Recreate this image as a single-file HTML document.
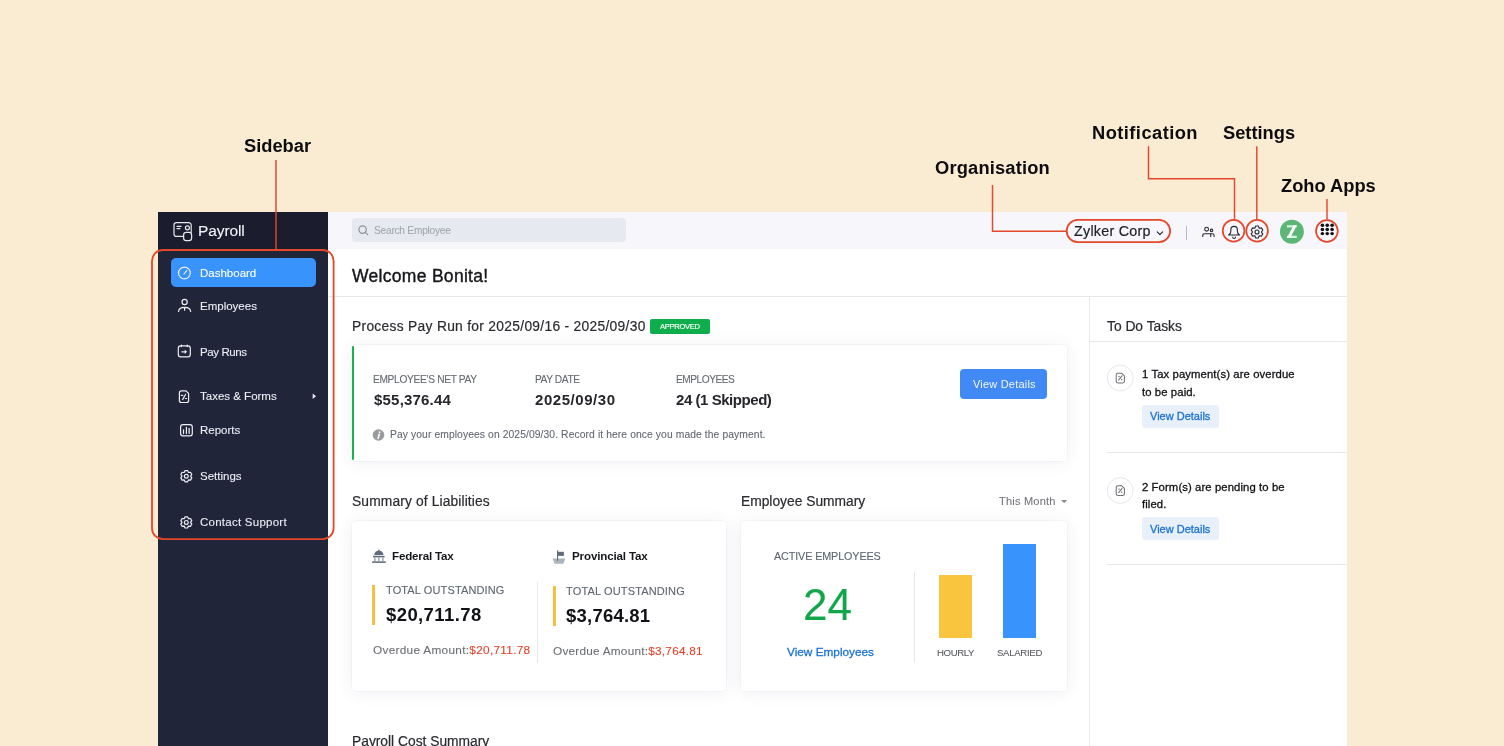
<!DOCTYPE html>
<html><head><meta charset="utf-8"><style>
html,body{margin:0;padding:0;width:1504px;height:746px;overflow:hidden;background:#faebd3;}
body{position:relative;font-family:"Liberation Sans",sans-serif;}
.t{position:absolute;white-space:nowrap;will-change:transform;}
.r{position:absolute;}
</style></head><body>
<div class="r" style="left:158px;top:212px;width:170px;height:534px;background:#21253a"></div>
<div class="r" style="left:158px;top:212px;width:170px;height:38px;background:#1b1d2e"></div>
<div class="r" style="left:328px;top:212px;width:1019px;height:534px;background:#ffffff"></div>
<div class="r" style="left:328px;top:212px;width:1019px;height:37px;background:#f6f6fb"></div>
<div class="r" style="left:328px;top:296px;width:1019px;height:1px;background:#e8e8eb"></div>
<div class="r" style="left:1089px;top:297px;width:1px;height:449px;background:#e8e8eb"></div>
<div class="t" style="left:197.5px;top:223.48px;font-size:15.5px;line-height:15.5px;color:#f2f3f6;font-weight:400;letter-spacing:-0.1px;-webkit-text-stroke:0.1px #f2f3f6;">Payroll</div>
<div class="r" style="left:171px;top:258px;width:145px;height:29px;background:#3893fc;border-radius:5px"></div>
<div class="t" style="left:200px;top:267.87px;font-size:11.5px;line-height:11.5px;color:#ffffff;font-weight:400;letter-spacing:0px;-webkit-text-stroke:0.1px #ffffff;">Dashboard</div>
<div class="t" style="left:200px;top:300.87px;font-size:11.5px;line-height:11.5px;color:#eceef3;font-weight:400;letter-spacing:0px;-webkit-text-stroke:0.1px #eceef3;">Employees</div>
<div class="t" style="left:200px;top:346.87px;font-size:11.5px;line-height:11.5px;color:#eceef3;font-weight:400;letter-spacing:-0.4px;-webkit-text-stroke:0.1px #eceef3;">Pay Runs</div>
<div class="t" style="left:200px;top:391.37px;font-size:11.5px;line-height:11.5px;color:#eceef3;font-weight:400;letter-spacing:0px;-webkit-text-stroke:0.1px #eceef3;">Taxes &amp; Forms</div>
<div class="t" style="left:200px;top:424.87px;font-size:11.5px;line-height:11.5px;color:#eceef3;font-weight:400;letter-spacing:0px;-webkit-text-stroke:0.1px #eceef3;">Reports</div>
<div class="t" style="left:200px;top:471.37px;font-size:11.5px;line-height:11.5px;color:#eceef3;font-weight:400;letter-spacing:0px;-webkit-text-stroke:0.1px #eceef3;">Settings</div>
<div class="t" style="left:200px;top:517.37px;font-size:11.5px;line-height:11.5px;color:#eceef3;font-weight:400;letter-spacing:0.25px;-webkit-text-stroke:0.1px #eceef3;">Contact Support</div>
<div class="r" style="left:352px;top:218px;width:274px;height:24px;background:#e6e9f0;border-radius:4px"></div>
<div class="t" style="left:374.1px;top:226.07px;font-size:10.2px;line-height:10.2px;color:#a3a7b0;font-weight:400;letter-spacing:-0.25px;-webkit-text-stroke:0.1px #a3a7b0;">Search Employee</div>
<div class="t" style="left:1073.8px;top:224.10px;font-size:14.3px;line-height:14.3px;color:#1e2025;font-weight:400;letter-spacing:0.25px;-webkit-text-stroke:0.2px #1e2025;">Zylker Corp</div>
<div class="r" style="left:1186px;top:226px;width:1px;height:14px;background:#b5bacb"></div>
<div class="t" style="left:352px;top:267.79px;font-size:17.5px;line-height:17.5px;color:#16171b;font-weight:400;letter-spacing:0.3px;-webkit-text-stroke:0.4px #16171b;">Welcome Bonita!</div>
<div class="t" style="left:352px;top:319.92px;font-size:13.8px;line-height:13.8px;color:#2a2b30;font-weight:400;letter-spacing:0.3px;-webkit-text-stroke:0.2px #2a2b30;">Process Pay Run for 2025/09/16 - 2025/09/30</div>
<div class="r" style="left:650px;top:319px;width:60px;height:15px;background:#0fae4c;border-radius:2px"></div>
<div class="t" style="left:659.6px;top:322.77px;font-size:7.6px;line-height:7.6px;color:#ffffff;font-weight:400;letter-spacing:-0.3px;-webkit-text-stroke:0.15px #ffffff;">APPROVED</div>
<div class="r" style="left:352px;top:345px;width:715px;height:116px;background:#fff;border-radius:4px;box-shadow:0 1px 18px rgba(40,50,110,0.075),0 0 0 1px rgba(40,50,110,0.03);"></div>
<div class="r" style="left:352px;top:346px;width:2px;height:114px;background:#18b24f;border-radius:1px"></div>
<div class="t" style="left:373.3px;top:374.97px;font-size:10.2px;line-height:10.2px;color:#666a71;font-weight:400;letter-spacing:-0.34px;-webkit-text-stroke:0.1px #666a71;">EMPLOYEE’S NET PAY</div>
<div class="t" style="left:373.5px;top:391.90px;font-size:15px;line-height:15px;color:#26272c;font-weight:700;letter-spacing:0.2px;">$55,376.44</div>
<div class="t" style="left:534.5px;top:374.97px;font-size:10.2px;line-height:10.2px;color:#666a71;font-weight:400;letter-spacing:-0.42px;-webkit-text-stroke:0.1px #666a71;">PAY DATE</div>
<div class="t" style="left:534.5px;top:391.90px;font-size:15px;line-height:15px;color:#26272c;font-weight:700;letter-spacing:0.55px;">2025/09/30</div>
<div class="t" style="left:676.2px;top:374.97px;font-size:10.2px;line-height:10.2px;color:#666a71;font-weight:400;letter-spacing:-0.5px;-webkit-text-stroke:0.1px #666a71;">EMPLOYEES</div>
<div class="t" style="left:676px;top:391.90px;font-size:15px;line-height:15px;color:#26272c;font-weight:700;letter-spacing:-0.45px;">24 (1 Skipped)</div>
<div class="r" style="left:960px;top:369px;width:87px;height:30px;background:#4189f5;border-radius:4px"></div>
<div class="t" style="left:972.5px;top:379.29px;font-size:11px;line-height:11px;color:#f4f8ff;font-weight:400;letter-spacing:0.2px;">View Details</div>
<div class="t" style="left:390px;top:430.38px;font-size:10.3px;line-height:10.3px;color:#626873;font-weight:400;letter-spacing:0.1px;-webkit-text-stroke:0.1px #626873;">Pay your employees on 2025/09/30. Record it here once you made the payment.</div>
<div class="t" style="left:352px;top:494.92px;font-size:13.8px;line-height:13.8px;color:#2a2b30;font-weight:400;letter-spacing:0.13px;-webkit-text-stroke:0.2px #2a2b30;">Summary of Liabilities</div>
<div class="r" style="left:352px;top:521px;width:374px;height:169.6px;background:#fff;border-radius:4px;box-shadow:0 1px 18px rgba(40,50,110,0.075),0 0 0 1px rgba(40,50,110,0.03);"></div>
<div class="t" style="left:392px;top:549.98px;font-size:11.6px;line-height:11.6px;color:#17181c;font-weight:700;letter-spacing:-0.18px;">Federal Tax</div>
<div class="t" style="left:572px;top:549.88px;font-size:11.6px;line-height:11.6px;color:#17181c;font-weight:700;letter-spacing:-0.15px;">Provincial Tax</div>
<div class="r" style="left:372px;top:585px;width:3px;height:40px;background:#f6bf3f"></div>
<div class="r" style="left:552.5px;top:586px;width:3px;height:40px;background:#f6bf3f"></div>
<div class="r" style="left:537px;top:582px;width:1px;height:81px;background:#e8e8eb"></div>
<div class="t" style="left:386px;top:585.09px;font-size:11px;line-height:11px;color:#5c6570;font-weight:400;letter-spacing:0.13px;-webkit-text-stroke:0.1px #5c6570;">TOTAL OUTSTANDING</div>
<div class="t" style="left:386px;top:605.94px;font-size:18.5px;line-height:18.5px;color:#111216;font-weight:700;letter-spacing:0.4px;">$20,711.78</div>
<div class="t" style="left:372.5px;top:645.11px;font-size:11.8px;line-height:11.8px;color:#6d6f74;font-weight:400;letter-spacing:0.3px;-webkit-text-stroke:0.1px #6d6f74;">Overdue Amount:<span style="color:#e3432a;-webkit-text-stroke-color:#e3432a">$20,711.78</span></div>
<div class="t" style="left:566px;top:586.29px;font-size:11px;line-height:11px;color:#5c6570;font-weight:400;letter-spacing:0.15px;-webkit-text-stroke:0.1px #5c6570;">TOTAL OUTSTANDING</div>
<div class="t" style="left:566px;top:606.94px;font-size:18.5px;line-height:18.5px;color:#111216;font-weight:700;letter-spacing:0.22px;">$3,764.81</div>
<div class="t" style="left:553px;top:645.61px;font-size:11.8px;line-height:11.8px;color:#6d6f74;font-weight:400;letter-spacing:0.23px;-webkit-text-stroke:0.1px #6d6f74;">Overdue Amount:<span style="color:#e3432a;-webkit-text-stroke-color:#e3432a">$3,764.81</span></div>
<div class="t" style="left:741px;top:494.92px;font-size:13.8px;line-height:13.8px;color:#2a2b30;font-weight:400;letter-spacing:0px;-webkit-text-stroke:0.2px #2a2b30;">Employee Summary</div>
<div class="t" style="left:999px;top:496.29px;font-size:11px;line-height:11px;color:#74767c;font-weight:400;letter-spacing:0.22px;-webkit-text-stroke:0.1px #74767c;">This Month</div>
<div class="r" style="left:741px;top:521px;width:326px;height:169.6px;background:#fff;border-radius:4px;box-shadow:0 1px 18px rgba(40,50,110,0.075),0 0 0 1px rgba(40,50,110,0.03);"></div>
<div class="t" style="left:774px;top:551.46px;font-size:10.8px;line-height:10.8px;color:#5c6570;font-weight:400;letter-spacing:-0.12px;-webkit-text-stroke:0.1px #5c6570;">ACTIVE EMPLOYEES</div>
<div class="t" style="left:802.8px;top:583.35px;font-size:44px;line-height:44px;color:#12a64b;font-weight:400;letter-spacing:0px;-webkit-text-stroke:0.1px #12a64b;">24</div>
<div class="t" style="left:787px;top:646.61px;font-size:11.8px;line-height:11.8px;color:#1b72d6;font-weight:400;letter-spacing:0px;-webkit-text-stroke:0.3px #1b72d6;">View Employees</div>
<div class="r" style="left:914px;top:572px;width:1px;height:91px;background:#e8e8eb"></div>
<div class="r" style="left:939px;top:575px;width:33px;height:63px;background:#f9c43e"></div>
<div class="r" style="left:1003px;top:544px;width:33px;height:94px;background:#3993fd"></div>
<div class="t" style="left:937px;top:648.47px;font-size:9.6px;line-height:9.6px;color:#5a5c62;font-weight:400;letter-spacing:-0.35px;-webkit-text-stroke:0.1px #5a5c62;">HOURLY</div>
<div class="t" style="left:997px;top:648.47px;font-size:9.6px;line-height:9.6px;color:#5a5c62;font-weight:400;letter-spacing:-0.3px;-webkit-text-stroke:0.1px #5a5c62;">SALARIED</div>
<div class="t" style="left:352px;top:735.22px;font-size:13.8px;line-height:13.8px;color:#2a2b30;font-weight:400;letter-spacing:0px;-webkit-text-stroke:0.2px #2a2b30;">Payroll Cost Summary</div>
<div class="t" style="left:1107px;top:319.92px;font-size:13.8px;line-height:13.8px;color:#2a2b30;font-weight:400;letter-spacing:0px;-webkit-text-stroke:0.2px #2a2b30;">To Do Tasks</div>
<div class="r" style="left:1090px;top:341px;width:257px;height:1px;background:#e8e8eb"></div>
<div class="t" style="left:1142px;top:369.23px;font-size:11.3px;line-height:11.3px;color:#111216;font-weight:400;letter-spacing:0.1px;-webkit-text-stroke:0.3px #111216;">1 Tax payment(s) are overdue</div>
<div class="t" style="left:1142px;top:386.83px;font-size:11.3px;line-height:11.3px;color:#111216;font-weight:400;letter-spacing:0.1px;-webkit-text-stroke:0.3px #111216;">to be paid.</div>
<div class="r" style="left:1142px;top:404.6px;width:77px;height:23px;background:#e8f0fc;border-radius:3px"></div>
<div class="t" style="left:1150px;top:411.39px;font-size:11px;line-height:11px;color:#1b72d6;font-weight:400;letter-spacing:0px;-webkit-text-stroke:0.3px #1b72d6;">View Details</div>
<div class="r" style="left:1107px;top:452px;width:240px;height:1px;background:#e8e8eb"></div>
<div class="t" style="left:1142px;top:481.73px;font-size:11.3px;line-height:11.3px;color:#111216;font-weight:400;letter-spacing:0.1px;-webkit-text-stroke:0.3px #111216;">2 Form(s) are pending to be</div>
<div class="t" style="left:1142px;top:499.33px;font-size:11.3px;line-height:11.3px;color:#111216;font-weight:400;letter-spacing:0.1px;-webkit-text-stroke:0.3px #111216;">filed.</div>
<div class="r" style="left:1142px;top:517.1px;width:77px;height:23px;background:#e8f0fc;border-radius:3px"></div>
<div class="t" style="left:1150px;top:523.89px;font-size:11px;line-height:11px;color:#1b72d6;font-weight:400;letter-spacing:0px;-webkit-text-stroke:0.3px #1b72d6;">View Details</div>
<div class="r" style="left:1107px;top:564px;width:240px;height:1px;background:#e8e8eb"></div>
<svg class="r" style="left:0;top:0" width="1504" height="746" viewBox="0 0 1504 746"><g fill="none" stroke="#e6e7ec" stroke-width="1.2" stroke-linecap="round" stroke-linejoin="round"><path d="M183.6 236.4H176.5A2.5 2.5 0 0 1 174 233.9V225.2A2.5 2.5 0 0 1 176.5 222.7H188.7A2.5 2.5 0 0 1 191.2 225.2V232.4"/><path d="M177 226.4H181M177 228.6H180"/><circle cx="187.4" cy="227.8" r="2"/><rect x="183.6" y="232.4" width="8" height="8.2" rx="2.6"/></g><g fill="none" stroke="#eceef3" stroke-width="1.2" stroke-linecap="round" stroke-linejoin="round"><circle cx="184.4" cy="273" r="5.9"/><path d="M184 274L186.7 270.6"/></g><g fill="none" stroke="#eceef3" stroke-width="1.2" stroke-linecap="round" stroke-linejoin="round"><circle cx="184.6" cy="302" r="2.6"/><path d="M178.6 311.4C178.6 308.8 181.2 307.3 184.6 307.3C188 307.3 190.6 308.8 190.6 311.4M184.6 307.6V310.2"/></g><g fill="none" stroke="#eceef3" stroke-width="1.2" stroke-linecap="round" stroke-linejoin="round"><rect x="178.3" y="345.9" width="12" height="11" rx="2.3"/><path d="M181.4 345.2V346.6M187.2 345.2V346.6M181.9 351.8H185.2"/></g><path d="M184.7 349.7L187.1 351.8L184.7 353.9Z" fill="#eceef3"/><g fill="none" stroke="#eceef3" stroke-width="1.2" stroke-linecap="round" stroke-linejoin="round"><path d="M186 390.9H181.4A2 2 0 0 0 179.4 392.9V400.5A2 2 0 0 0 181.4 402.5H186.6A2 2 0 0 0 188.6 400.5V393.5Z"/><path d="M182.6 399.6L185.6 394.3M181.4 395.4H182.7M185.4 398.5H186.6"/></g><g fill="none" stroke="#eceef3" stroke-width="1.2" stroke-linecap="round" stroke-linejoin="round"><rect x="180.6" y="424.6" width="11.7" height="11.2" rx="2.3"/><path d="M183.5 433.6V429.8M186.4 433.6V427.3"/></g><rect x="188.3" y="428" width="1.7" height="5.9" fill="#b9bbc4"/><path d="M312.7 393.6L316 396.3L312.7 399Z" fill="#eceef3"/><g fill="none" stroke="#eceef3" stroke-width="1.2" stroke-linecap="round" stroke-linejoin="round"><path d="M184.18 472.52 L185.05 470.59 L187.55 470.59 L188.43 472.52 L190.53 472.31 L191.79 474.48 L190.55 476.20 L191.79 477.92 L190.53 480.09 L188.43 479.88 L187.55 481.81 L185.05 481.81 L184.18 479.88 L182.07 480.09 L180.81 477.92 L182.05 476.20 L180.81 474.48 L182.07 472.31Z"/><circle cx="186.3" cy="476.2" r="1.9"/></g><g fill="none" stroke="#eceef3" stroke-width="1.2" stroke-linecap="round" stroke-linejoin="round"><path d="M184.18 518.72 L185.05 516.79 L187.55 516.79 L188.43 518.72 L190.53 518.51 L191.79 520.68 L190.55 522.40 L191.79 524.12 L190.53 526.29 L188.43 526.08 L187.55 528.01 L185.05 528.01 L184.18 526.08 L182.07 526.29 L180.81 524.12 L182.05 522.40 L180.81 520.68 L182.07 518.51Z"/><circle cx="186.3" cy="522.4" r="1.9"/></g><g fill="none" stroke="#8d919b" stroke-width="1.2" stroke-linecap="round"><circle cx="362.6" cy="229.6" r="3.7"/><path d="M365.4 232.4L367.6 234.6"/></g><path d="M1157.2 231.9L1159.9 234.6L1162.6 231.9" fill="none" stroke="#25272d" stroke-width="1.2" stroke-linecap="round" stroke-linejoin="round"/><g fill="none" stroke="#26282e" stroke-width="1.1" stroke-linecap="round" stroke-linejoin="round"><circle cx="1206.6" cy="229.2" r="1.9"/><circle cx="1211.5" cy="230.4" r="1.25"/><path d="M1202.7 236.5V235.4Q1202.7 233.8 1204.5 233.8H1212.3Q1214.1 233.8 1214.1 235.4V236.5M1210.7 234V236.5"/></g><g fill="none" stroke="#26282e" stroke-width="1.1" stroke-linecap="round" stroke-linejoin="round"><path d="M1228.65 234.95Q1230.85 233.6 1230.85 231.6V229.6A3.25 3.25 0 0 1 1237.35 229.6V231.6Q1237.35 233.6 1239.55 234.95Z"/><path d="M1232.7 237.1A1.4 1.4 0 0 0 1235.5 237.1"/></g><g fill="none" stroke="#26282e" stroke-width="1.1" stroke-linecap="round" stroke-linejoin="round"><path d="M1254.80 228.19 L1255.73 226.03 L1258.27 226.03 L1259.20 228.19 L1261.53 227.92 L1262.80 230.11 L1261.40 232.00 L1262.80 233.89 L1261.53 236.08 L1259.20 235.81 L1258.27 237.97 L1255.73 237.97 L1254.80 235.81 L1252.47 236.08 L1251.20 233.89 L1252.60 232.00 L1251.20 230.11 L1252.47 227.92Z"/><circle cx="1257" cy="232" r="2"/></g><circle cx="1291.9" cy="231.7" r="11.95" fill="#5cb776"/><rect x="1286.9" y="225.2" width="9.85" height="2.25" fill="#d2f4da"/><rect x="1286.9" y="235.75" width="9.85" height="2.25" fill="#d2f4da"/><path d="M1293.5 225.2H1296.75L1290.3 238H1286.9Z" fill="#fff"/><ellipse cx="1322.4" cy="225.3" rx="1.8" ry="1.7" fill="#111"/><ellipse cx="1327.25" cy="225.3" rx="1.8" ry="1.7" fill="#111"/><ellipse cx="1332.1" cy="225.3" rx="1.8" ry="1.7" fill="#111"/><ellipse cx="1322.4" cy="229.5" rx="1.8" ry="1.7" fill="#111"/><ellipse cx="1327.25" cy="229.5" rx="1.8" ry="1.7" fill="#111"/><ellipse cx="1332.1" cy="229.5" rx="1.8" ry="1.7" fill="#111"/><ellipse cx="1322.4" cy="233.6" rx="1.8" ry="1.7" fill="#111"/><ellipse cx="1327.25" cy="233.6" rx="1.8" ry="1.7" fill="#111"/><ellipse cx="1332.1" cy="233.6" rx="1.8" ry="1.7" fill="#111"/><circle cx="378.5" cy="435" r="5.8" fill="#9a9b9f"/><path d="M379.2 434.3L378.1 438.4" stroke="#fff" stroke-width="1.6" stroke-linecap="round"/><circle cx="379.6" cy="432.2" r=".9" fill="#fff"/><g fill="#5f6c7b"><path d="M374.2 555Q374.6 550.9 378.85 550.5Q383.1 550.9 383.5 555Z"/><circle cx="378.85" cy="550.3" r="0.8"/><rect x="373" y="555.8" width="11.6" height="1.6"/><rect x="372.1" y="561.3" width="13.6" height="1.6"/></g><g fill="#9aa6b3"><rect x="374.1" y="557.4" width="1.5" height="3.9"/><rect x="378.1" y="557.4" width="1.5" height="3.9"/><rect x="382.1" y="557.4" width="1.5" height="3.9"/></g><path d="M552.5 558.6H562.6Q564.8 557.6 565.1 559.4L563.3 563.7H554.6Z" fill="#a9b5bf"/><g fill="#5f6d7c"><rect x="557" y="550.4" width="1.1" height="10.3"/><rect x="558" y="551.8" width="5.9" height="4.1"/></g><path d="M1061.2 500H1067.1L1064.15 503.2Z" fill="#8a8c92"/><circle cx="1120.2" cy="378" r="12.9" fill="#fff" stroke="#e6e6ea" stroke-width="1"/><g transform="translate(0 0)" fill="none" stroke="#6f7176" stroke-width="1.05" stroke-linecap="round" stroke-linejoin="round"><path d="M1121.8 373.3H1117.8A1.6 1.6 0 0 0 1116.2 374.9V381.3A1.6 1.6 0 0 0 1117.8 382.9H1122.8A1.6 1.6 0 0 0 1124.4 381.3V375.9Z"/><path d="M1118.7 380.1L1122 375.9M1118.8 376.6H1119.3M1121.4 379.6H1121.9"/></g><circle cx="1120.2" cy="490.5" r="12.9" fill="#fff" stroke="#e6e6ea" stroke-width="1"/><g transform="translate(0 112.5)" fill="none" stroke="#6f7176" stroke-width="1.05" stroke-linecap="round" stroke-linejoin="round"><path d="M1121.8 373.3H1117.8A1.6 1.6 0 0 0 1116.2 374.9V381.3A1.6 1.6 0 0 0 1117.8 382.9H1122.8A1.6 1.6 0 0 0 1124.4 381.3V375.9Z"/><path d="M1118.7 380.1L1122 375.9M1118.8 376.6H1119.3M1121.4 379.6H1121.9"/></g></svg>
<div class="t" style="left:243.5px;top:136.91px;font-size:18.3px;line-height:18.3px;color:#0d0d0f;font-weight:700;letter-spacing:0px;">Sidebar</div>
<div class="t" style="left:934.5px;top:159.11px;font-size:18.3px;line-height:18.3px;color:#0d0d0f;font-weight:700;letter-spacing:0.18px;">Organisation</div>
<div class="t" style="left:1091.5px;top:124.41px;font-size:18.3px;line-height:18.3px;color:#0d0d0f;font-weight:700;letter-spacing:0.45px;">Notification</div>
<div class="t" style="left:1222.5px;top:124.41px;font-size:18.3px;line-height:18.3px;color:#0d0d0f;font-weight:700;letter-spacing:0px;">Settings</div>
<div class="t" style="left:1281px;top:177.41px;font-size:18.3px;line-height:18.3px;color:#0d0d0f;font-weight:700;letter-spacing:0px;">Zoho Apps</div>
<svg class="r" style="left:0;top:0" width="1504" height="746" viewBox="0 0 1504 746"><g fill="none" stroke="#e4472a" stroke-width="1.8"><rect x="152" y="250" width="181.6" height="289.2" rx="11"/><path d="M276 160V249.5" stroke-width="1.45"/><path d="M992.5 185V231.2H1066" stroke-width="1.45"/><rect x="1066.7" y="219.9" width="103.4" height="22.2" rx="11.1"/><path d="M1148.5 146.3V178.8H1234.5V219.5" stroke-width="1.45"/><circle cx="1233.6" cy="230.8" r="10.85" stroke-width="1.7"/><path d="M1256.8 146.3V219.5" stroke-width="1.45"/><circle cx="1257.1" cy="230.8" r="10.85" stroke-width="1.7"/><path d="M1327 199V219.5" stroke-width="1.45"/><circle cx="1326.9" cy="231" r="10.85" stroke-width="1.7"/></g></svg>
</body></html>
